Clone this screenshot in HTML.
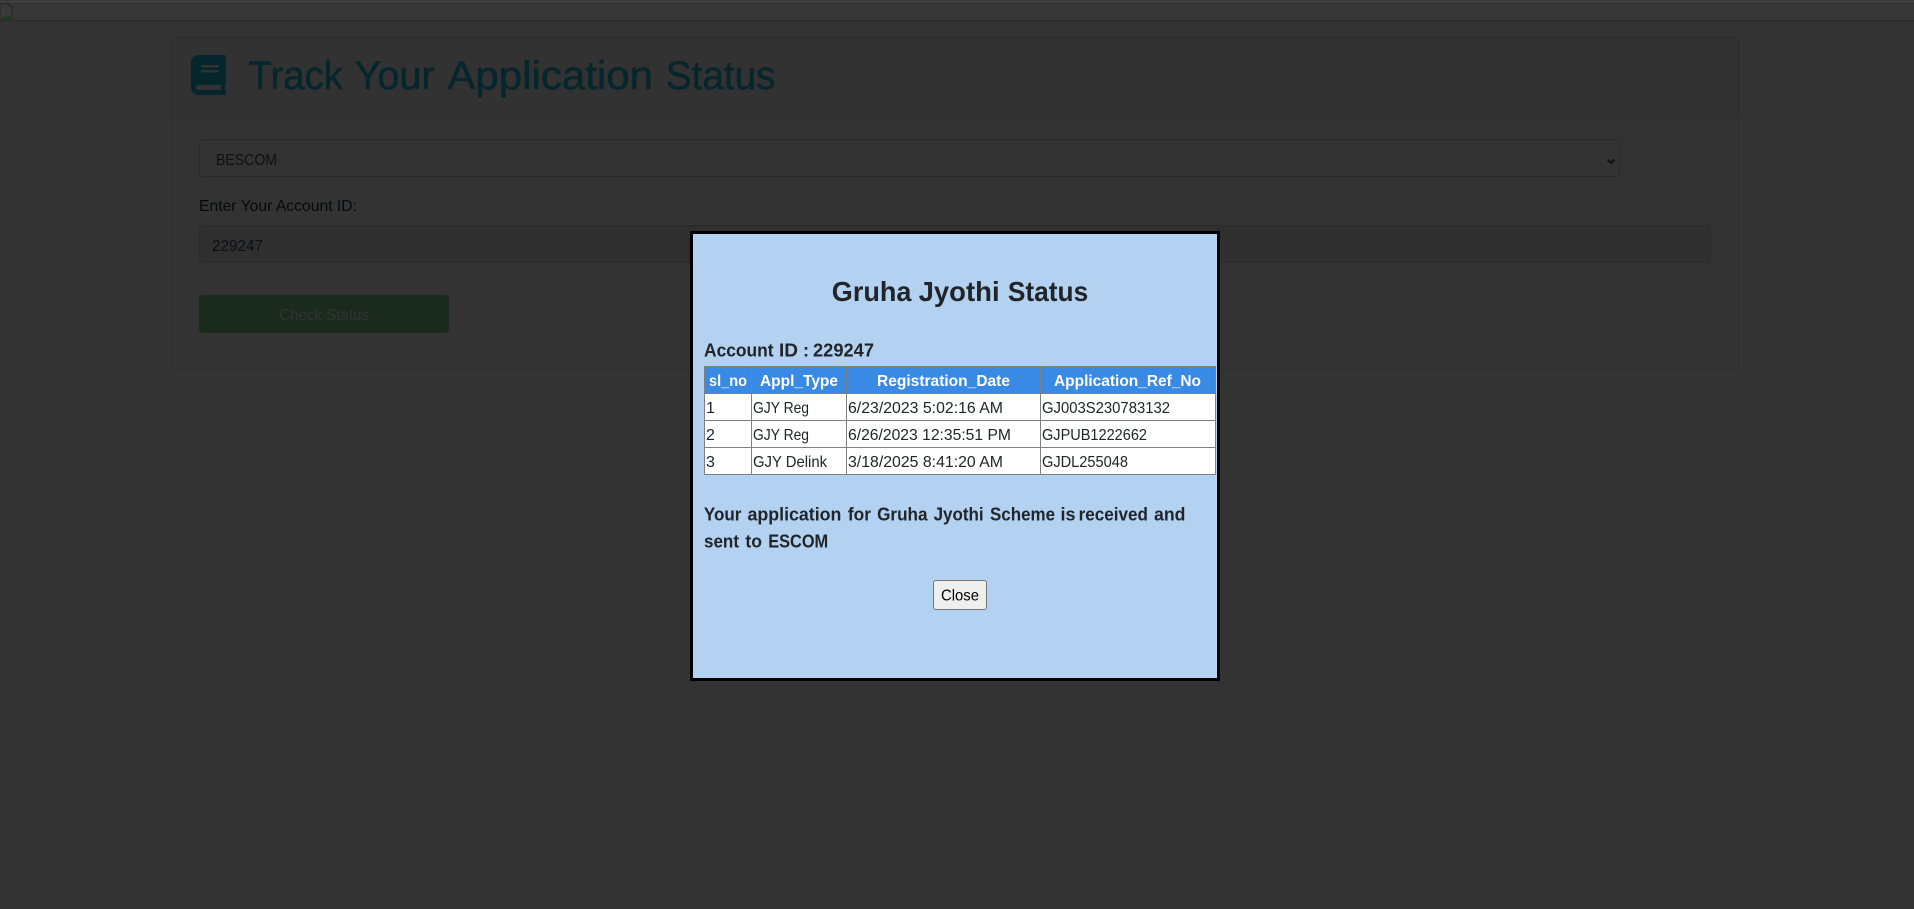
<!DOCTYPE html>
<html lang="en">
<head>
<meta charset="utf-8">
<title>Track Your Application Status</title>
<style>
html,body{margin:0;padding:0;width:1914px;height:909px;overflow:hidden;background:#333}
svg{display:block;position:absolute;left:0;top:0}
text{font-family:"Liberation Sans",sans-serif}
</style>
</head>
<body>
<svg width="1914" height="909" viewBox="0 0 1914 909" xmlns="http://www.w3.org/2000/svg">
  <rect width="1914" height="909" fill="#333"/>
  <!-- top strip -->
  <rect x="0" y="0" width="1914" height="20" fill="#373737"/>
  <rect x="0" y="1" width="1914" height="1" fill="#474747"/>
  <rect x="0" y="20" width="1914" height="1" fill="#2b2b2b"/>
  <!-- broken image -->
  <path d="M0 4h8l4 4v11H0z" fill="#3a3a3a" stroke="#262626" stroke-width="1"/>
  <path d="M0 19l5-3 3-1 4 4z" fill="#1d3b20"/>
  <!-- card -->
  <rect x="171.500" y="37.500" width="1567" height="332" rx="3" fill="#333" stroke="#2d2d2d"/>
  <rect x="172" y="38" width="1566" height="80" fill="#323232"/>
  <rect x="172" y="118" width="1566" height="1" fill="#2d2d2d"/>
  <!-- book icon -->
  <svg x="191" y="55" width="35" height="40" viewBox="0 0 448 512">
    <path fill="#04262c" d="M448 360V24c0-13.300-10.700-24-24-24H96C43 0 0 43 0 96v320c0 53 43 96 96 96h328c13.300 0 24-10.700 24-24v-16c0-7.500-3.500-14.300-8.900-18.700-4.200-15.400-4.200-59.300 0-74.700 5.400-4.300 8.900-11.100 8.900-18.600zM128 134c0-3.300 2.700-6 6-6h212c3.300 0 6 2.700 6 6v20c0 3.300-2.700 6-6 6H134c-3.300 0-6-2.700-6-6v-20zm0 64c0-3.300 2.700-6 6-6h212c3.300 0 6 2.700 6 6v20c0 3.300-2.700 6-6 6H134c-3.300 0-6-2.700-6-6v-20zm253.400 250H96c-17.700 0-32-14.300-32-32 0-17.600 14.400-32 32-32h285.400c-1.900 17.100-1.900 46.900 0 64z"/>
  </svg>
  <g font-size="40" fill="#04262c" stroke="#04262c" stroke-width="0.500">
    <text x="248.500" y="89" textLength="94.400" lengthAdjust="spacingAndGlyphs">Track</text>
    <text x="354.600" y="89" textLength="80" lengthAdjust="spacingAndGlyphs">Your</text>
    <text x="447.400" y="89" textLength="205.600" lengthAdjust="spacingAndGlyphs">Application</text>
    <text x="665.800" y="89" textLength="109.700" lengthAdjust="spacingAndGlyphs">Status</text>
  </g>
  <!-- select -->
  <rect x="199.500" y="139.500" width="1420" height="37" rx="3.500" fill="#333" stroke="#2a2a2a"/>
  <text x="216" y="165" font-size="16" fill="#0f1011" textLength="61" lengthAdjust="spacingAndGlyphs">BESCOM</text>
  <path d="M1607.500 159.500l3.500 3.500 3.500-3.500" fill="none" stroke="#111" stroke-width="2"/>
  <!-- label -->
  <text x="199" y="211" font-size="16" fill="#07080a" textLength="158" lengthAdjust="spacingAndGlyphs">Enter Your Account ID:</text>
  <!-- input -->
  <rect x="199.500" y="225.500" width="1511" height="37" rx="3.500" fill="#2f2f30" stroke="#2a2a2a"/>
  <text x="212" y="251" font-size="16" fill="#0f1011" textLength="51" lengthAdjust="spacingAndGlyphs">229247</text>
  <!-- button -->
  <rect x="199" y="295" width="250" height="38" rx="3.500" fill="#1a2b1d"/>
  <text x="279" y="320" font-size="16" fill="#333333" textLength="90" lengthAdjust="spacingAndGlyphs">Check Status</text>

  <!-- modal -->
  <rect x="690" y="231" width="530" height="450" fill="#000"/>
  <rect x="693" y="234" width="524" height="444" fill="#b3d1f0"/>
  <g font-size="28" font-weight="700" fill="#212529">
    <text x="831.800" y="301" textLength="79.600" lengthAdjust="spacingAndGlyphs">Gruha</text>
    <text x="918.600" y="301" textLength="81" lengthAdjust="spacingAndGlyphs">Jyothi</text>
    <text x="1007.900" y="301" textLength="80.300" lengthAdjust="spacingAndGlyphs">Status</text>
  </g>
  <g font-size="18" font-weight="700" fill="#212529">
    <text x="704" y="356.500" textLength="69.600" lengthAdjust="spacingAndGlyphs">Account</text>
    <text x="779" y="356.500" textLength="19" lengthAdjust="spacingAndGlyphs">ID</text>
    <text x="803" y="356.500">:</text>
    <text x="813" y="356.500" textLength="61" lengthAdjust="spacingAndGlyphs">229247</text>
  </g>

  <!-- table -->
  <rect x="704" y="367" width="512" height="107" fill="#fff"/>
  <rect x="704" y="367" width="512" height="26" fill="#388ae5"/>
  <g fill="none" stroke="#808080" stroke-width="1">
    <rect x="704.500" y="366.500" width="511" height="108"/>
    <path d="M704 393.500h512M704 420.500h512M704 447.500h512M751.500 366v108M846.500 366v108M1040.500 366v108"/>
  </g>
  <g font-size="16" font-weight="700" fill="#fff">
    <text x="709" y="386" textLength="38" lengthAdjust="spacingAndGlyphs">sl_no</text>
    <text x="760" y="386" textLength="78" lengthAdjust="spacingAndGlyphs">Appl_Type</text>
    <text x="877" y="386" textLength="133" lengthAdjust="spacingAndGlyphs">Registration_Date</text>
    <text x="1054" y="386" textLength="147" lengthAdjust="spacingAndGlyphs">Application_Ref_No</text>
  </g>
  <g font-size="16" fill="#212529">
    <text x="706" y="413">1</text>
    <text x="753" y="413" textLength="56" lengthAdjust="spacingAndGlyphs">GJY Reg</text>
    <text x="848" y="413" textLength="155" lengthAdjust="spacingAndGlyphs">6/23/2023 5:02:16 AM</text>
    <text x="1042" y="413" textLength="128" lengthAdjust="spacingAndGlyphs">GJ003S230783132</text>
    <text x="706" y="440">2</text>
    <text x="753" y="440" textLength="56" lengthAdjust="spacingAndGlyphs">GJY Reg</text>
    <text x="848" y="440" textLength="163" lengthAdjust="spacingAndGlyphs">6/26/2023 12:35:51 PM</text>
    <text x="1042" y="440" textLength="105" lengthAdjust="spacingAndGlyphs">GJPUB1222662</text>
    <text x="706" y="467">3</text>
    <text x="753" y="467" textLength="74" lengthAdjust="spacingAndGlyphs">GJY Delink</text>
    <text x="848" y="467" textLength="155" lengthAdjust="spacingAndGlyphs">3/18/2025 8:41:20 AM</text>
    <text x="1042" y="467" textLength="86" lengthAdjust="spacingAndGlyphs">GJDL255048</text>
  </g>

  <g font-size="18" font-weight="700" fill="#212529">
    <text x="703.900" y="520.500" textLength="37.500" lengthAdjust="spacingAndGlyphs">Your</text>
    <text x="747.500" y="520.500" textLength="93.900" lengthAdjust="spacingAndGlyphs">application</text>
    <text x="847.900" y="520.500" textLength="23.100" lengthAdjust="spacingAndGlyphs">for</text>
    <text x="877.100" y="520.500" textLength="50.400" lengthAdjust="spacingAndGlyphs">Gruha</text>
    <text x="933.600" y="520.500" textLength="50" lengthAdjust="spacingAndGlyphs">Jyothi</text>
    <text x="990" y="520.500" textLength="65" lengthAdjust="spacingAndGlyphs">Scheme</text>
    <text x="1060.500" y="520.500">is</text>
    <text x="1078.600" y="520.500" textLength="69.300" lengthAdjust="spacingAndGlyphs">received</text>
    <text x="1154" y="520.500" textLength="31.400" lengthAdjust="spacingAndGlyphs">and</text>
    <text x="704" y="547.500" textLength="35" lengthAdjust="spacingAndGlyphs">sent</text>
    <text x="745.400" y="547.500" textLength="16.600" lengthAdjust="spacingAndGlyphs">to</text>
    <text x="768.200" y="547.500" textLength="60" lengthAdjust="spacingAndGlyphs">ESCOM</text>
  </g>

  <!-- close -->
  <rect x="933.500" y="580.500" width="53" height="29" rx="2.500" fill="#efefef" stroke="#767676"/>
  <text x="941" y="600.500" font-size="16" fill="#000" textLength="38" lengthAdjust="spacingAndGlyphs">Close</text>
</svg>
</body>
</html>
